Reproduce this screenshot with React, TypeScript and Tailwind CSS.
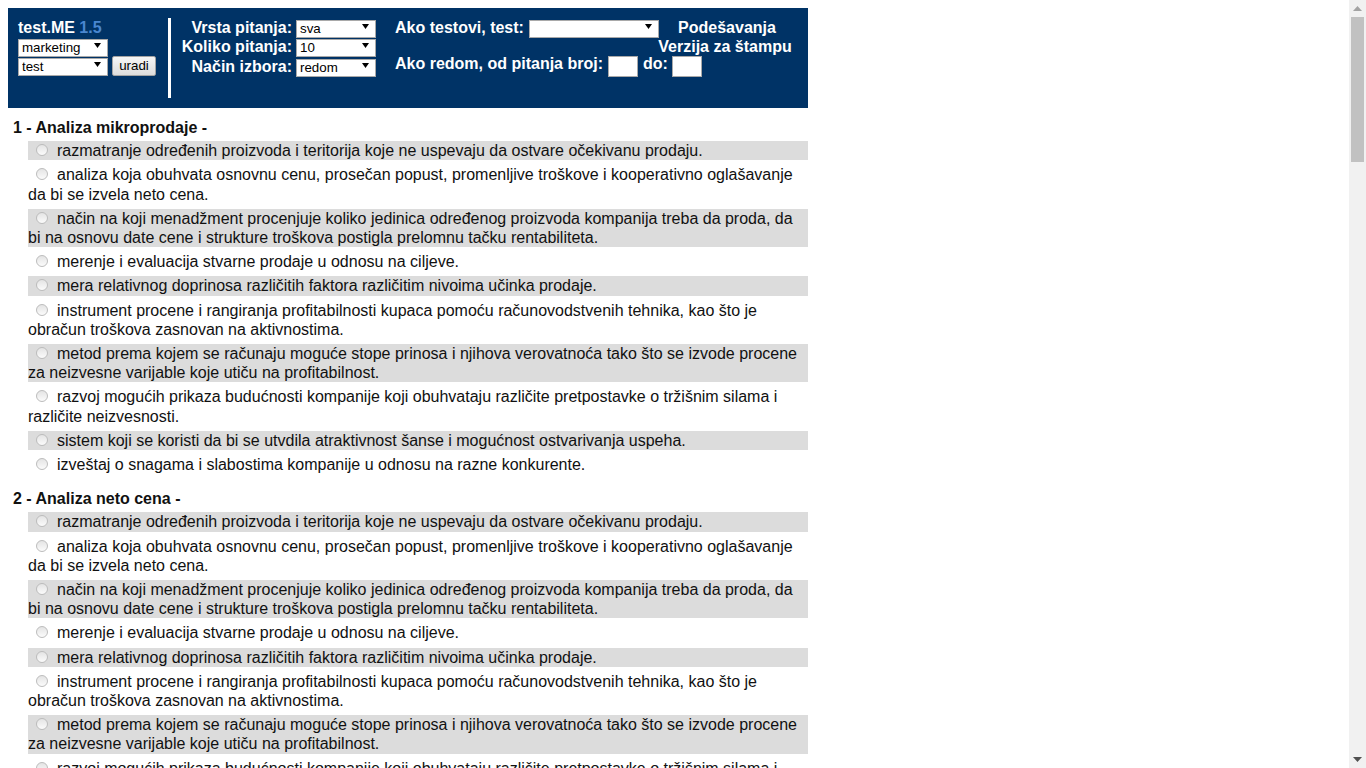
import React from 'react';

const answers = [
  'razmatranje određenih proizvoda i teritorija koje ne uspevaju da ostvare očekivanu prodaju.',
  'analiza koja obuhvata osnovnu cenu, prosečan popust, promenljive troškove i kooperativno oglašavanje da bi se izvela neto cena.',
  'način na koji menadžment procenjuje koliko jedinica određenog proizvoda kompanija treba da proda, da bi na osnovu date cene i strukture troškova postigla prelomnu tačku rentabiliteta.',
  'merenje i evaluacija stvarne prodaje u odnosu na ciljeve.',
  'mera relativnog doprinosa različitih faktora različitim nivoima učinka prodaje.',
  'instrument procene i rangiranja profitabilnosti kupaca pomoću računovodstvenih tehnika, kao što je obračun troškova zasnovan na aktivnostima.',
  'metod prema kojem se računaju moguće stope prinosa i njihova verovatnoća tako što se izvode procene za neizvesne varijable koje utiču na profitabilnost.',
  'razvoj mogućih prikaza budućnosti kompanije koji obuhvataju različite pretpostavke o tržišnim silama i različite neizvesnosti.',
  'sistem koji se koristi da bi se utvdila atraktivnost šanse i mogućnost ostvarivanja uspeha.',
  'izveštaj o snagama i slabostima kompanije u odnosu na razne konkurente.',
];

const questions = [
  { id: 1, title: 'Analiza mikroprodaje' },
  { id: 2, title: 'Analiza neto cena' },
];

const Arrow = () => (
  <svg className="absolute right-[7px] top-[6px] pointer-events-none" width="7" height="5" viewBox="0 0 7 5">
    <path d="M0 0H7L3.5 5Z" fill="#000" />
  </svg>
);

const Sel: React.FC<{ className: string; value: string; options: string[] }> = ({ className, value, options }) => (
  <div className={`relative h-[18px] ${className}`}>
    <select
      defaultValue={value}
      className="appearance-none w-full h-full bg-white border border-[#a9a9a9] pl-[3px] text-[13.33px] leading-[16px] text-black font-normal outline-none"
    >
      {options.map((o) => (
        <option key={o} value={o}>{o}</option>
      ))}
    </select>
    <Arrow />
  </div>
);

const Header = () => (
  <div className="w-[800px] h-[100px] bg-[#003366] flex px-[10px] py-[10px] text-white font-bold text-[16px] leading-[19px]">
    <div className="w-[150px] flex flex-col">
      <div className="h-[19px]">
        test.ME <span className="text-[#4a87d0]">1.5</span>
      </div>
      <Sel className="w-[90px]" value="marketing" options={['marketing']} />
      <div className="flex mt-[1px]">
        <Sel className="w-[90px]" value="test" options={['test']} />
        <button className="ml-[4px] w-[44px] h-[20px] bg-linear-to-b from-[#f6f6f6] to-[#dddddd] border border-[#a3a3a3] rounded-[2px] text-[13.33px] text-black font-normal leading-[16px]">
          uradi
        </button>
      </div>
    </div>
    <div className="w-[3px] bg-white" />
    <div className="flex flex-col">
      <div className="flex h-[19px]">
        <span className="w-[121px] text-right">Vrsta pitanja:</span>
        <Sel className="ml-[4px] w-[80px]" value="sva" options={['sva']} />
      </div>
      <div className="flex h-[20px]">
        <span className="w-[121px] text-right">Koliko pitanja:</span>
        <Sel className="ml-[4px] w-[80px]" value="10" options={['10']} />
      </div>
      <div className="flex h-[19px]">
        <span className="w-[121px] text-right">Način izbora:</span>
        <Sel className="ml-[4px] w-[80px]" value="redom" options={['redom']} />
      </div>
    </div>
    <div className="ml-[19px] flex flex-col">
      <div className="flex h-[19px]">
        <span className="w-[134px] whitespace-nowrap">Ako testovi, test:</span>
        <Sel className="w-[130px]" value="" options={['']} />
        <span className="w-[136px] text-center">Podešavanja</span>
      </div>
      <div className="h-[17px] pl-[262px]">
        <span className="block w-[136px] text-center whitespace-nowrap">Verzija za štampu</span>
      </div>
      <div className="flex items-start">
        <span className="w-[213px] whitespace-nowrap">Ako redom, od pitanja broj:</span>
        <input type="text" className="mt-[2px] w-[30px] h-[21px] bg-white border border-[#a9a9a9] outline-none" />
        <span className="ml-[5px]">do:</span>
        <input type="text" className="ml-[4px] mt-[2px] w-[30px] h-[21px] bg-white border border-[#a9a9a9] outline-none" />
      </div>
    </div>
  </div>
);

const Question: React.FC<{ id: number; title: string }> = ({ id, title }) => (
  <div className="mb-[15px]">
    <div className="pl-[5px] font-bold leading-[19.2px]">
      {id} - {title} -
    </div>
    <div className="ml-[20px] w-[780px] mt-[4px]">
      {answers.map((a, i) => (
        <div key={i} className={`leading-[19.2px] mb-[5px] ${i % 2 === 0 ? 'bg-[#dcdcdc]' : ''}`}>
          <input
            type="radio"
            name={`q${id}`}
            className="appearance-none inline-block w-[12px] h-[12px] ml-[8px] mr-[9px] rounded-full border border-[#bcbcbc] bg-linear-to-b from-[#e4e4e4] to-[#fbfbfb] align-baseline"
          />
          {a}
        </div>
      ))}
    </div>
  </div>
);

// the window's scrollbar, drawn since the headless browser hides its own
const Scrollbar = () => (
  <div className="w-[17px] h-full bg-[#f1f1f1] flex flex-col items-center shrink-0">
    <div className="h-[17px] flex items-center justify-center">
      <svg width="9" height="5" viewBox="0 0 9 5">
        <path d="M0 5L4.5 0L9 5Z" fill="#a3a3a3" />
      </svg>
    </div>
    <div className="w-[13px] h-[145px] bg-[#c1c1c1]" />
    <div className="flex-1" />
    <div className="h-[17px] flex items-center justify-center">
      <svg width="9" height="5" viewBox="0 0 9 5">
        <path d="M0 0L4.5 5L9 0Z" fill="#505050" />
      </svg>
    </div>
  </div>
);

export default function App() {
  return (
    <div className="h-screen flex bg-white">
      <div className="flex-1 overflow-y-auto [scrollbar-width:none]">
        <div className="p-[8px] font-['Liberation_Sans',Arial,sans-serif] text-[16px] text-[#111]">
          <Header />
          <div className="mt-[10px]">
            {questions.map((q) => (
              <Question key={q.id} id={q.id} title={q.title} />
            ))}
          </div>
        </div>
      </div>
      <Scrollbar />
    </div>
  );
}
